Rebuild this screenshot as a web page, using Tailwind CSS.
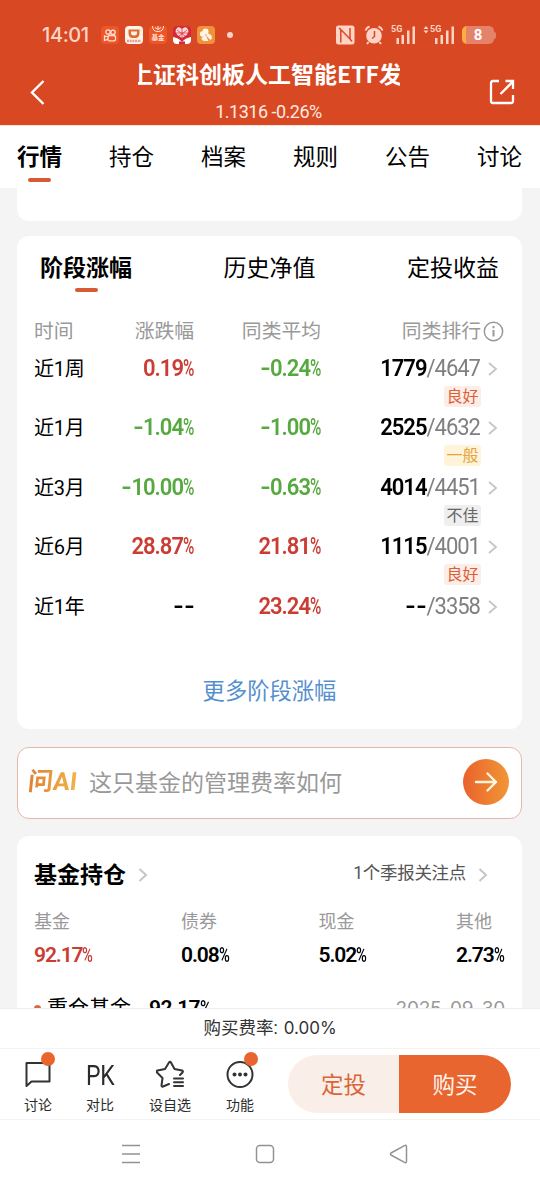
<!DOCTYPE html>
<html lang="zh-CN">
<head>
  <meta charset="UTF-8" />
  <meta name="viewport" content="width=device-width, initial-scale=1.0"/>
  <title>基金详情</title>
  <script src="https://cdn.jsdelivr.net/npm/@tailwindcss/browser@4"></script>
</head>
<body class="w-[540px] h-[1187px] overflow-hidden bg-white text-black font-[Roboto,'Noto_Sans_CJK_SC',sans-serif] leading-none whitespace-nowrap">

  <!-- Header -->
  <header class="h-[125px] bg-[#d84923] text-white">
    <div class="h-[60px] pt-[10px] pl-[42px] pr-[44px] flex items-center justify-between text-[#ffd3c6]">
      <div class="flex items-center">
        <span class="w-[59px] text-[20px] font-medium font-[Inter] tracking-[-0.4px]">14:01</span>
        <div class="flex gap-[6px]">
          <svg class="size-[18px]" viewBox="0 0 18 18" fill="none" stroke="#ffe3da" stroke-width="1.3">
            <rect width="18" height="18" rx="4" fill="#ee5527" stroke="none"/>
            <circle cx="7" cy="6" r="2.2"/><circle cx="12" cy="6.3" r="2.2"/>
            <rect x="7" y="9.5" width="7.5" height="5.3" rx="1.6"/><path d="M7 11 3.5 9.8v4.6L7 13.4"/>
          </svg>
          <svg class="size-[18px]" viewBox="0 0 18 18" fill="none">
            <rect width="18" height="18" rx="4" fill="#fff3e8"/>
            <path d="M3.500 3.500h11v3.500q0 5-4 5h-3q-4 0-4-5z" fill="#df6c35"/>
            <path d="M6 5.500h6v1.500Q12 9.500 9 9.500T6 7z" fill="#fff3e8"/>
            <path d="M2 15h14" stroke="#e99a91" stroke-width="2.500" stroke-dasharray="2 .7"/>
          </svg>
          <div class="relative size-[18px] rounded bg-[#ee5527] text-[#ffe3da] overflow-hidden">
            <svg class="absolute inset-0" viewBox="0 0 18 18" fill="none" stroke="#ffe3da"><path d="M3.500 0q0 5.500 5.500 5.500T14.500 0M6 1.500l3 2 3-2M9 0v3.500"/></svg>
            <span class="absolute left-[2.500px] top-[8px] text-[6.500px] font-bold leading-[8px]">基金</span>
          </div>
          <svg class="size-[18px]" viewBox="0 0 18 18" fill="none">
            <rect width="18" height="18" rx="4" fill="#d52938"/>
            <path d="M9 3Q5-.5 3 3.500q-2 4.500 6 8.500 8-4 6-8.500Q13-.5 9 3z" fill="#ffd9d5"/>
            <path d="m4 4 8 6M14 4l-8 6M9 3v9M3 7h12" stroke="#d52938" stroke-width=".7"/>
            <path d="M0 11q6 1 9 5 3-4 9-5v3q0 4-4 4H4q-4 0-4-4z" fill="#fff"/>
            <path d="M6 15.500h6V18H6z" fill="#d52938"/>
          </svg>
          <svg class="size-[18px]" viewBox="0 0 18 18">
            <rect width="18" height="18" rx="4" fill="#ef923b"/>
            <g fill="#fff6e9"><circle cx="8.500" cy="5.500" r="3"/><circle cx="5.500" cy="8" r="2.700"/><path d="M9.500 6.500 14 9q2 3-.5 5L9.500 10zM8.500 9l3 6h-4q-3-.5-3-3z"/></g>
          </svg>
        </div>
        <span class="ml-[12px] size-[6px] rounded-full bg-[#ffd3c6]"></span>
      </div>
      <div class="flex items-center">
        <svg class="w-[19px] h-[20px]" viewBox="0 0 19 20" fill="none">
          <rect y=".5" width="18.500" height="19" rx="2.500" fill="#ffd3c6"/>
          <path d="M4.800 17.500V4.500L14 14V3M4.800 4.500 3 3M14 14l2 2.500" stroke="#d84923" stroke-width="1.500"/>
        </svg>
        <svg class="ml-[9px] w-[20px] h-[20px]" viewBox="0 0 20 20" fill="none" stroke="#ffd3c6">
          <circle cx="10" cy="10.800" r="7.800" fill="#ffd3c6" stroke="none"/>
          <path d="M1.500 5.500q1-3 4-4M18.500 5.500q-1-3-4-4" stroke-width="2"/><path d="m4.500 17-1.500 2M15.500 17l1.500 2" stroke-width="2"/>
          <path d="M10.500 6v5.500L8 13.500" stroke="#d84923" stroke-width="1.500"/>
        </svg>
        <div class="relative ml-[7px] w-[25px] h-[20px]">
          <span class="absolute left-0 top-0 text-[9px] leading-[9px] font-bold">5G</span>
          <svg class="size-full" viewBox="0 0 25 20" fill="#ffd3c6"><rect x="5.500" y="13" width="2.500" height="6"/><rect x="10.500" y="10" width="2.500" height="9"/><rect x="16" y="5.500" width="2.500" height="13.500"/><rect x="21.500" y="1.500" width="2.500" height="17.500"/></svg>
        </div>
        <div class="relative ml-[7px] w-[32px] h-[20px]">
          <span class="absolute left-[7px] top-0 text-[9px] leading-[9px] font-bold">5G</span>
          <svg class="size-full" viewBox="0 0 32 20" fill="#ffd3c6"><path d="M3 1 5.500 4H.5zM3 8.500.5 5.500h5z"/><rect x="12" y="13" width="2.500" height="6"/><rect x="17.500" y="10" width="2.500" height="9"/><rect x="23" y="5.500" width="2.500" height="13.500"/><rect x="28.500" y="1.500" width="2.500" height="17.500"/></svg>
        </div>
        <div class="ml-[7px] flex items-center">
          <div class="w-[32px] h-[18px] rounded-[5px] border-l-[4px] border-[#fbae41] bg-[#e5826a] pr-[4px] text-center text-[15px] leading-[19px] font-bold text-white">8</div>
          <span class="w-[2px] h-[7px] rounded-r bg-[#e5826a]"></span>
        </div>
      </div>
    </div>
    <div class="h-[65px] flex justify-between pl-[29px] pr-[25px]">
      <svg class="mt-[20px] w-[16px] h-[25px]" viewBox="0 0 16 25" fill="none" stroke="#fff" stroke-width="2.400"><path d="M14.500 1 3 12.500 14.500 24"/></svg>
      <div class="w-[262px] ml-[3px] text-center">
        <div class="h-[28px] overflow-hidden flex justify-center">
          <h1 class="mr-[5px] text-[23px] leading-[26px] font-bold font-['Noto_Sans_CJK_SC',sans-serif]">上证科创板人工智能ETF发</h1>
        </div>
        <p class="mt-[14px] text-[18px] leading-[20px] text-[#ffe9e2] tracking-[-0.500px]">1.1316 -0.26%</p>
      </div>
      <svg class="mt-[19px] w-[26px] h-[26px]" viewBox="0 0 26 26" fill="none" stroke="#fff" stroke-width="2.300"><path d="M10 2H4Q2 2 2 4v18q0 2 2 2h18q2 0 2-2v-6M11.500 15 24 2.500M16.500 2H24v8"/></svg>
    </div>
  </header>

  <!-- Section tabs -->
  <nav class="h-[63px] border-t border-[#fde4d9] bg-white pl-[17px] pr-[18px] flex justify-between text-[22.500px]">
    <div class="flex flex-col items-center pt-[20px] font-bold">行情<span class="mt-[9px] w-[23px] h-[4px] rounded-full bg-[#d85a34]"></span></div>
    <div class="pt-[20px]">持仓</div>
    <div class="pt-[20px]">档案</div>
    <div class="pt-[20px]">规则</div>
    <div class="pt-[20px]">公告</div>
    <div class="pt-[20px]">讨论</div>
  </nav>

  <main class="h-[820px] overflow-hidden bg-[#f4f4f4] pl-[17px] pr-[18px]">
    <section class="h-[33px] rounded-b-xl bg-white"></section>

    <!-- Period returns -->
    <section class="mt-[15px] h-[493px] rounded-xl bg-white">
      <div class="h-[80px] pl-[23px] pr-[23px] flex justify-between text-[23px]">
        <div class="flex flex-col items-center pt-[21px] font-bold">阶段涨幅<span class="mt-[8px] w-[23px] h-[4px] rounded-full bg-[#d85a34]"></span></div>
        <div class="pt-[21px]">历史净值</div>
        <div class="pt-[21px]">定投收益</div>
      </div>
      <div class="flex h-[30px] items-center pl-[17px] text-[19.800px] text-[#999]">
        <span class="w-[60px] pt-px">时间</span>
        <span class="w-[100px] pt-px text-right">涨跌幅</span>
        <span class="w-[127px] pt-px text-right">同类平均</span>
        <span class="w-[160px] pt-px text-right">同类排行</span>
        <svg class="ml-[2px] size-[21px]" viewBox="0 0 21 21" fill="none" stroke="#999" stroke-width="1.500"><circle cx="10.500" cy="10.500" r="9.200"/><path d="M10.500 9v6.500M10.500 5v2.300" stroke-width="2"/></svg>
      </div>
      <div id="rows" class="pt-[8px] h-[334px]"></div>
      <a class="block text-center text-[22.300px] text-[#558fce]">更多阶段涨幅</a>
    </section>

    <!-- Ask AI -->
    <section class="mt-[18px] h-[72px] rounded-xl border border-[#e5b8a4] bg-white flex items-center pl-[10px] pr-[12px] pb-[2px]">
      <span class="w-[61px] -skew-x-6 bg-linear-to-r from-[#df8033] to-[#f3c04d] bg-clip-text text-transparent text-[25px] leading-[32px] font-bold">问AI</span>
      <span class="flex-1 pt-[3px] text-[23px] text-[#999]">这只基金的管理费率如何</span>
      <span class="size-[46px] rounded-full bg-linear-to-r from-[#e9622c] to-[#f19537] flex items-center justify-center">
        <svg class="size-[24px]" viewBox="0 0 24 24" fill="none" stroke="#fff5dc" stroke-width="2.400" stroke-linecap="round" stroke-linejoin="round"><path d="M2 12h20M13.500 3.500 22 12l-8.500 8.500"/></svg>
      </span>
    </section>

    <!-- Holdings -->
    <section class="mt-[17px] h-[240px] rounded-t-xl bg-white pl-[17px] pr-[17px]">
      <div class="flex items-center pt-[23px] h-[54px]">
        <h2 class="pt-[2px] text-[23px] font-bold">基金持仓</h2>
        <svg class="ml-[12px] w-[10px] h-[14px]" viewBox="0 0 10 14" fill="none" stroke="#c6c6c6" stroke-width="2"><path d="m1.500 1 6.500 6-6.500 6"/></svg>
        <span class="ml-auto pb-[2px] text-[17.500px] tracking-[-0.300px] text-[#555]">1个季报关注点</span>
        <svg class="ml-[12px] mr-[17px] w-[10px] h-[14px]" viewBox="0 0 10 14" fill="none" stroke="#c6c6c6" stroke-width="2"><path d="m1.500 1 6.500 6-6.500 6"/></svg>
      </div>
      <div id="holdings" class="flex pt-[23px] h-[104px]"></div>
      <div class="flex items-center h-[28px] text-[21px]">
        <span class="size-[7px] rounded-full bg-[#d9693f] mr-[6px]"></span>
        <span>重仓基金</span>
        <span class="ml-[18px] font-semibold tracking-[-0.600px]">92.17<span class="inline-block w-[12px] origin-left scale-x-75 font-medium">%</span></span>
        <span class="ml-auto font-[Inter] text-[19px] tracking-[-0.200px] text-[#999]">2025-09-30</span>
      </div>
    </section>
  </main>

  <!-- Bottom bar -->
  <div class="h-[40px] border-t border-[#eee] flex items-center justify-center text-[17.500px] text-[#333]">购买费率:<span class="ml-[6px] font-[Inter] text-[17px]">0.00%</span></div>
  <footer class="h-[72px] border-y border-[#f3f3f3] flex text-[14px] text-[#2b2b2b]">
    <div class="relative w-[76px] pt-[11px] flex flex-col items-center">
      <svg class="size-[28px]" viewBox="0 0 28 28" fill="none" stroke="#333" stroke-width="2" stroke-linejoin="round"><path d="M2.500 3h23v18.500H7.500l-5 4.500z"/></svg>
      <span class="absolute left-[41px] top-[3px] size-[14px] rounded-full bg-[#e8652f]"></span>
      <span class="mt-[10px]">讨论</span>
    </div>
    <div class="w-[48px] pt-[11px] flex flex-col items-center">
      <span class="h-[28px] pt-[2px] text-[28px] leading-[28px] scale-x-82 tracking-[-0.500px]">PK</span>
      <span class="mt-[10px]">对比</span>
    </div>
    <div class="w-[92px] pt-[11px] flex flex-col items-center">
      <svg class="size-[28px]" viewBox="0 0 28 28" fill="none" stroke="#333" stroke-width="2" stroke-linecap="round" stroke-linejoin="round"><path d="m13 24-6 2.500q-1.500.5-1.500-1l1-7.500L1 12.500q-1-1.500.5-2L9 9l4-6.500q1-1.500 2 0L18.500 9l7.500 1.500q1.500.5.5 2L24 15"/><path d="M18 18.500h9M18 22.300h9M18 26h9"/></svg>
      <span class="mt-[10px]">设自选</span>
    </div>
    <div class="relative w-[48px] pt-[11px] flex flex-col items-center">
      <svg class="size-[28px]" viewBox="0 0 28 28" fill="none" stroke="#333" stroke-width="2"><circle cx="14" cy="14.500" r="12.500"/><g fill="#333" stroke="none"><circle cx="8.500" cy="14.500" r="2"/><circle cx="14" cy="14.500" r="2"/><circle cx="19.500" cy="14.500" r="2"/></g></svg>
      <span class="absolute left-[28px] top-[3px] size-[14px] rounded-full bg-[#e8652f]"></span>
      <span class="mt-[10px]">功能</span>
    </div>
    <div class="ml-[24px] mt-[6px] w-[223px] h-[58px] rounded-full overflow-hidden flex text-[22.500px]">
      <button class="w-[111px] pt-[2px] bg-[#faeee9] text-[#d96638]">定投</button>
      <button class="w-[112px] pt-[2px] bg-[#e86530] text-[#fff3ec]">购买</button>
    </div>
  </footer>
  <div class="h-[67px] pr-[6px] flex items-center justify-center">
    <svg class="w-[290px] h-[20px]" viewBox="0 0 290 20" fill="none" stroke="#929292" stroke-width="1.500"><path d="M0 1.500h18M0 10h18M0 18.500h18"/><rect x="134.500" y="1.500" width="17" height="17" rx="3.500"/><path d="M269 9q-1 1 0 2l13.500 7.300q2 1 2-1V2.700q0-2-2-1z" stroke-linejoin="round"/></svg>
  </div>

  <script>
    const red = 'text-[#cb3c32]';
    const green = 'text-[#56a93f]';
    const tags = {
      '良好': 'bg-[#fdede7] text-[#dc5f36]',
      '一般': 'bg-[#fff3d9] text-[#e3a53c]',
      '不佳': 'bg-[#efefef] text-[#666]',
    };
    const rows = [
      ['近1周', '0.19', '-0.24', '1779', '4647', '良好'],
      ['近1月', '-1.04', '-1.00', '2525', '4632', '一般'],
      ['近3月', '-10.00', '-0.63', '4014', '4451', '不佳'],
      ['近6月', '28.87', '21.81', '1115', '4001', '良好'],
      ['近1年', '--', '23.24', '--', '3358', ''],
    ];

    // widen the hyphens so they read as minus signs
    function dash(v) {
      return v.replace(/-/g, '<span class="inline-block w-[8px] mr-[3px] origin-left scale-x-130">-</span>');
    }
    // narrow bold figure with a lighter percent sign
    function pct(v) {
      if (v === '--') return dash(v);
      return `${dash(v)}<span class="inline-block w-[11px] origin-left scale-x-70 font-medium">%</span>`;
    }
    function tone(v) {
      if (v === '--') return 'text-black';
      return v.startsWith('-') ? green : red;
    }

    document.getElementById('rows').innerHTML = rows.map(([name, change, avg, rank, total, tag]) => `
      <div class="h-[59.400px] pl-[17px]">
        <div class="flex h-[30px] items-center text-[22px] tracking-[-1px]">
          <span class="w-[60px] text-[20px] tracking-[-0.200px]">${name}</span>
          <span class="w-[100px] text-right font-semibold scale-y-107 ${tone(change)}">${pct(change)}</span>
          <span class="w-[127px] text-right font-semibold scale-y-107 ${tone(avg)}">${pct(avg)}</span>
          <span class="w-[159px] text-right scale-y-107 text-[#808080]"><b class="font-semibold text-black">${dash(rank)}</b>/${total}</span>
          <svg class="ml-[8px] w-[10px] h-[14px]" viewBox="0 0 10 14" fill="none" stroke="#c6c6c6" stroke-width="1.800"><path d="m1 1 7 6-7 6"/></svg>
        </div>
        ${tag ? `<div class="ml-[410px] mt-[2px] w-[37px] h-[21px] rounded-[3px] flex items-center justify-center pt-px text-[16px] ${tags[tag]}">${tag}</div>` : ''}
      </div>`).join('');

    const holdings = [['基金', '92.17', red], ['债券', '0.08', ''], ['现金', '5.02', ''], ['其他', '2.73', '']];
    document.getElementById('holdings').innerHTML = holdings.map(([name, v, color], i) => `
      <div class="${i === 0 ? 'w-[147px]' : i === 3 ? 'w-[50px]' : 'w-[137.500px]'} shrink-0">
        <div class="text-[18px] text-[#999]">${name}</div>
        <div class="mt-[14px] text-[21px] font-semibold tracking-[-1.100px] ${color}">${pct(v)}</div>
      </div>`).join('');
  </script>
</body>
</html>
